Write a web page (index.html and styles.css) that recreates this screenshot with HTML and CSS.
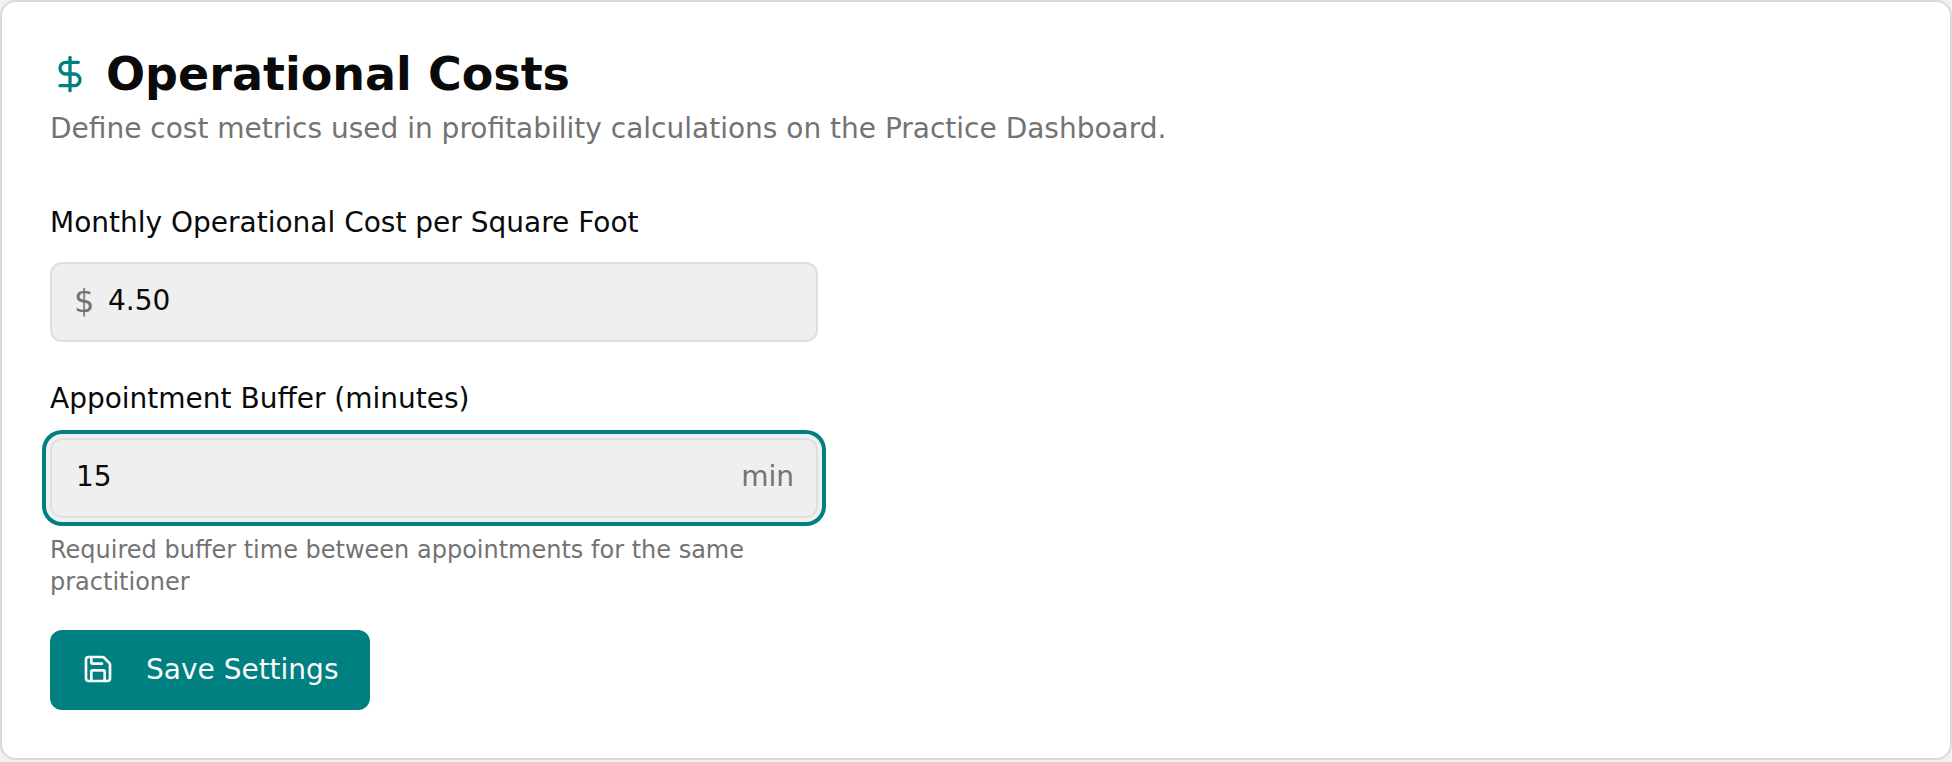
FILE: index.html
```html
<!DOCTYPE html>
<html lang="en">
<head>
    <meta charset="utf-8">
    <title>Operational Costs</title>
    <link rel="stylesheet" href="styles.css">
</head>
<body>
    <section class="card">
        <header class="card-header">
            <h2 class="card-title">
                <svg class="title-icon" viewBox="0 0 24 24" aria-hidden="true">
                    <line x1="12" x2="12" y1="2" y2="22"/>
                    <path d="M17 5H9.5a3.5 3.5 0 0 0 0 7h5a3.5 3.5 0 0 1 0 7H6"/>
                </svg>
                Operational Costs
            </h2>
            <p class="card-description">Define cost metrics used in profitability calculations on the Practice Dashboard.</p>
        </header>

        <form class="settings-form">
            <div class="field">
                <label for="costPerSqft">Monthly Operational Cost per Square Foot</label>
                <div class="input-wrap">
                    <span class="prefix">$</span>
                    <input class="has-prefix" type="number" id="costPerSqft" name="costPerSqft" step="0.01" min="0" value="4.50">
                </div>
            </div>

            <div class="field">
                <label for="buffer">Appointment Buffer (minutes)</label>
                <div class="input-wrap">
                    <input class="has-suffix focused" type="number" id="buffer" name="buffer" min="0" value="15" aria-describedby="bufferHelp">
                    <span class="suffix">min</span>
                </div>
                <p class="help" id="bufferHelp">Required buffer time between appointments for the same practitioner</p>
            </div>

            <button class="save-button" type="submit">
                <svg class="save-icon" viewBox="0 0 24 24" aria-hidden="true">
                    <path d="M15.2 3a2 2 0 0 1 1.4.6l3.8 3.8a2 2 0 0 1 .6 1.4V19a2 2 0 0 1-2 2H5a2 2 0 0 1-2-2V5a2 2 0 0 1 2-2z"/>
                    <path d="M17 21v-7a1 1 0 0 0-1-1H8a1 1 0 0 0-1 1v7"/>
                    <path d="M7 3v4a1 1 0 0 0 1 1h7"/>
                </svg>
                Save Settings
            </button>
        </form>
    </section>
</body>
</html>
```
FILE: styles.css
```css
* {
    box-sizing: border-box;
}

body {
    margin: 0;
    background-color: #f0f0f0;
    color: #0a0a0a;
    font-family: "DejaVu Sans", sans-serif;
    font-size: 28px;
}

svg {
    flex-shrink: 0;
    fill: none;
    stroke: currentColor;
    stroke-width: 2;
    stroke-linecap: round;
    stroke-linejoin: round;
}

.card {
    padding: 48px;
    background-color: #fff;
    border: 2px solid #d9d9d9;
    border-radius: 16px;
}

.card-header {
    margin-bottom: 48px;
}

.card-title {
    display: flex;
    align-items: center;
    gap: 16px;
    margin: 0 0 12px;
    font-size: 46px;
    font-weight: bold;
    line-height: 48px;
}

.title-icon {
    width: 40px;
    height: 40px;
    color: #008080;
}

.card-description {
    margin: 0;
    padding-bottom: 2px;
    color: #737373;
    line-height: 38px;
}

.settings-form {
    display: flex;
    flex-direction: column;
    align-items: flex-start;
    gap: 32px;
}

.field {
    display: flex;
    flex-direction: column;
    gap: 14px;
    width: 100%;
    max-width: 768px;
}

label {
    line-height: 50px;
}

.input-wrap {
    position: relative;
}

.input-wrap input {
    display: block;
    width: 100%;
    height: 80px;
    padding: 0 24px 4px;
    border: 2px solid #dfdfdf;
    border-radius: 12px;
    background-color: #efefef;
    color: inherit;
    font: inherit;
    outline: none;
    appearance: textfield;
}

.input-wrap input::-webkit-inner-spin-button {
    display: none;
}

.input-wrap .has-prefix {
    padding-left: 56px;
}

.input-wrap .has-suffix {
    padding-right: 96px;
}

.input-wrap input:focus,
.input-wrap .focused {
    box-shadow: 0 0 0 4px #f0f0f0, 0 0 0 8px #008080;
}

.prefix,
.suffix {
    position: absolute;
    top: 0;
    color: #737373;
    line-height: 78px;
}

.prefix {
    left: 24px;
    font-size: 32px;
}

.suffix {
    right: 24px;
}

.help {
    margin: 0;
    padding-top: 2px;
    color: #737373;
    font-size: 24px;
    line-height: 32px;
}

.save-button {
    display: flex;
    align-items: center;
    gap: 32px;
    height: 80px;
    padding: 0 32px 2px;
    border: none;
    border-radius: 12px;
    background-color: #008080;
    color: #fafafa;
    font: inherit;
    cursor: pointer;
}

.save-icon {
    width: 32px;
    height: 32px;
}
```
